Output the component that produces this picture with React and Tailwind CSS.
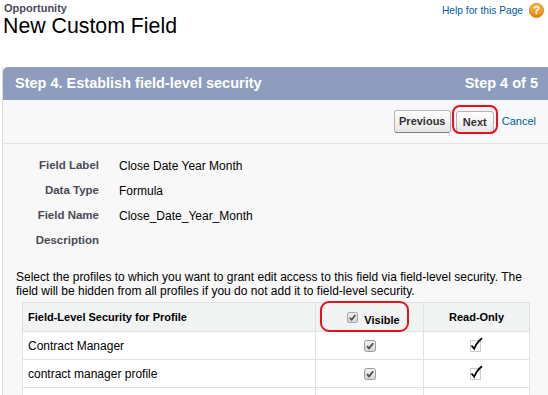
import React from 'react';

const GrayCheck = ({ size = 12 }) => (
  <svg width={size} height={size} viewBox="0 0 12 12">
    <defs>
      <linearGradient id="cbg" x1="0" y1="0" x2="0" y2="1">
        <stop offset="0" stopColor="#f2f2f2" />
        <stop offset="1" stopColor="#d4d4d4" />
      </linearGradient>
    </defs>
    <rect x="0.5" y="0.5" width="11" height="11" rx="2" fill="url(#cbg)" stroke="#9a9a9a" />
    <path d="M3 6.2 L5 8.4 L9.2 3.2" fill="none" stroke="#4d4d4d" strokeWidth="1.8" />
  </svg>
);

const ReadOnlyCheck = () => (
  <svg width="13" height="15" viewBox="0 0 13 15">
    <rect x="0.5" y="3.5" width="10" height="11" fill="none" stroke="#9a9a9a" strokeWidth="1" strokeDasharray="1 1" />
    <path d="M1.5 8.5 L4.2 11.8 Q6.5 5.5 12 1.2" fill="none" stroke="#000" strokeWidth="1.8" />
  </svg>
);

const fields = [
  ['Field Label', 'Close Date Year Month'],
  ['Data Type', 'Formula'],
  ['Field Name', 'Close_Date_Year_Month'],
  ['Description', ''],
];

const profiles = ['Contract Manager', 'contract manager profile', ''];

export default function App() {
  return (
    <div className="w-[548px] h-[395px] overflow-hidden bg-white text-black font-['Liberation_Sans',Arial,sans-serif]">
      <div className="h-[67px] flex justify-between">
        <div className="pl-[4px] pt-[2px]">
          <div className="text-[11px] font-bold text-[#4a4a56] leading-[12px]">Opportunity</div>
          <div className="text-[21.3px] leading-[24px] ml-[-1px]">New Custom Field</div>
        </div>
        <div className="flex items-center gap-[6px] pr-[4px] pt-[3px] self-start">
          <span className="text-[10.2px] text-[#015ba7]">Help for this Page</span>
          <div className="w-[15px] h-[15px] rounded-full bg-gradient-to-b from-[#fbbd44] to-[#e3850a] border border-[#d27a06] flex items-center justify-center text-white text-[11px] font-bold leading-none">?</div>
        </div>
      </div>

      <div className="ml-[2px] border-l border-[#d8dde2] bg-[#f8f8f8]">
        <div className="h-[33px] bg-[#8e9dbe] rounded-tl-[5px] flex items-center justify-between pl-[12px] pr-[10px] text-white font-bold text-[14.5px]">
          <span>Step 4. Establish field-level security</span>
          <span>Step 4 of 5</span>
        </div>

        <div className="h-[44px] border-b border-[#e0e3e5] flex items-center justify-end pr-[12px]">
          <button className="w-[57px] h-[23px] rounded-[3px] border border-[#b5b5b5] border-b-[#7f7f7f] bg-gradient-to-b from-white to-[#e6e6e6] text-[11px] font-bold text-[#333]">
            Previous
          </button>
          <div className="relative ml-[5px]">
            <button className="w-[38px] h-[23px] rounded-[3px] border border-[#b5b5b5] border-b-[#7f7f7f] bg-gradient-to-b from-white to-[#e6e6e6] text-[11px] font-bold text-[#333]">
              Next
            </button>
            <div className="absolute left-[-4px] top-[-4px] w-[46px] h-[29px] border-2 border-[#e8101a] rounded-[8px]" />
          </div>
          <span className="ml-[8px] text-[11px] text-[#015ba7]">Cancel</span>
        </div>

        <div className="pt-[9px]">
          {fields.map(([label, value]) => (
            <div key={label} className="h-[25px] flex items-center">
              <div className="w-[96px] text-right text-[11.5px] font-bold text-[#4a4a56]">{label}</div>
              <div className="ml-[20px] text-[12px]">{value}</div>
            </div>
          ))}
        </div>

        <p className="mt-[17px] pl-[13px] text-[12px] leading-[14px]">
          Select the profiles to which you want to grant edit access to this field via field-level security. The
          <br />
          field will be hidden from all profiles if you do not add it to field-level security.
        </p>

        <div className="mt-[4px] ml-[19px] w-[508px] border border-[#e0e3e5] bg-white">
          <div className="h-[29px] flex bg-[#f2f3f3] border-b border-[#e0e3e5] text-[11px] font-bold">
            <div className="w-[293px] border-r border-[#e0e3e5] flex items-center pl-[5px]">
              Field-Level Security for Profile
            </div>
            <div className="relative w-[108px] border-r border-[#e0e3e5] flex items-center justify-center pl-[8px] gap-[6px]">
              <GrayCheck size={11} />
              <span className="mt-[7px]">Visible</span>
              <div className="absolute left-[4px] top-[-2px] w-[89px] h-[31px] border-2 border-[#e8101a] rounded-[9px]" />
            </div>
            <div className="flex-1 flex items-center justify-center">Read-Only</div>
          </div>
          {profiles.map((p, i) => (
            <div key={i} className="h-[28px] flex border-b border-[#e0e3e5] text-[12px]">
              <div className="w-[293px] border-r border-[#e0e3e5] flex items-center pl-[5px]">{p}</div>
              <div className="w-[108px] border-r border-[#e0e3e5] flex items-center justify-center">
                {p && <GrayCheck />}
              </div>
              <div className="flex-1 flex items-center justify-center pb-[2px]">{p && <ReadOnlyCheck />}</div>
            </div>
          ))}
        </div>
      </div>
    </div>
  );
}
